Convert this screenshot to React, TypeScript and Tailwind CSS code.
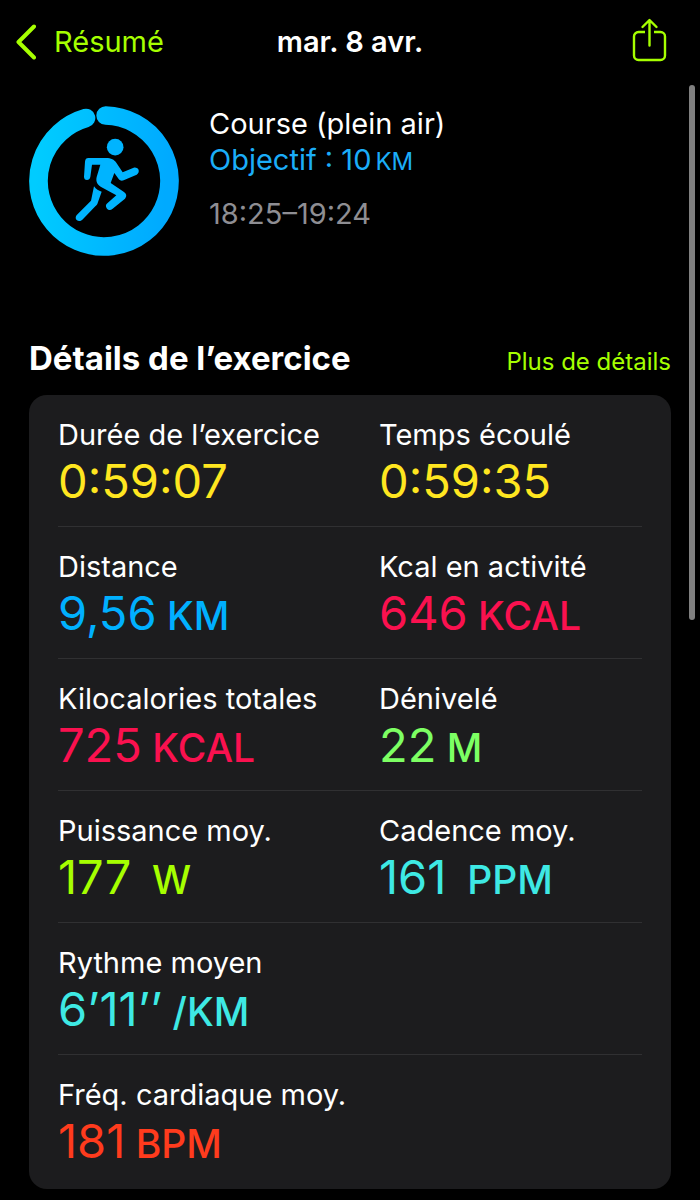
import { FC } from "react";

interface Metric {
  label: string;
  value: string;
  unit?: string;
  color: string;
}

const rows: Metric[][] = [
  [
    { label: "Durée de l’exercice", value: "0:59:07", color: "text-[#ffe620]" },
    { label: "Temps écoulé", value: "0:59:35", color: "text-[#ffe620]" },
  ],
  [
    { label: "Distance", value: "9,56", unit: "KM", color: "text-[#00b0ff]" },
    { label: "Kcal en activité", value: "646", unit: "KCAL", color: "text-[#fa114f]" },
  ],
  [
    { label: "Kilocalories totales", value: "725", unit: "KCAL", color: "text-[#fa114f]" },
    { label: "Dénivelé", value: "22", unit: "M", color: "text-[#7dff63]" },
  ],
  [
    { label: "Puissance moy.", value: "177", unit: "\u00a0W", color: "text-[#a6ff00]" },
    { label: "Cadence moy.", value: "161", unit: "\u00a0PPM", color: "text-[#3ee9e4]" },
  ],
  [{ label: "Rythme moyen", value: "6’11’’", unit: "/KM", color: "text-[#3ee9e4]" }],
  [{ label: "Fréq. cardiaque moy.", value: "181", unit: "BPM", color: "text-[#ff3b1d]" }],
];

const Header: FC = () => (
  <header className="grid h-[84px] grid-cols-[1fr_auto_1fr] items-center px-4 text-[29px] leading-9">
    <a href="#resume" className="flex items-center gap-[18px] text-[#a6ff00]">
      <svg className="h-9 w-5" viewBox="0 0 20 36" fill="none" aria-hidden="true">
        <path
          d="M18 2.5 2.5 18 18 33.5"
          stroke="currentColor"
          strokeWidth="4"
          strokeLinecap="round"
          strokeLinejoin="round"
        />
      </svg>
      Résumé
    </a>
    <h1 className="font-semibold">mar. 8 avr.</h1>
    <button type="button" aria-label="Partager" className="justify-self-end pr-4 text-[#a6ff00]">
      <svg
        className="h-[50px] w-9"
        viewBox="0 0 36 50"
        fill="none"
        stroke="currentColor"
        strokeWidth="2.4"
        strokeLinecap="round"
        strokeLinejoin="round"
        aria-hidden="true"
      >
        <path
          d="M13 15H6.5A4.5 4.5 0 0 0 2 19.5v19A4.5 4.5 0 0 0 6.5 43h22a4.5 4.5 0 0 0 4.5-4.5v-19a4.5 4.5 0 0 0-4.5-4.5H22"
          strokeLinecap="butt"
        />
        <path d="M17.5 28.5V3.5M10.500 10l7-7 7 7" />
      </svg>
    </button>
  </header>
);

const GoalRing: FC = () => (
  <svg className="size-[150px] shrink-0" viewBox="27 33 450 450" role="img" aria-label="Course">
    <defs>
      <linearGradient id="ring" x1="1" y1="0.3" x2="0" y2="0.2">
        <stop offset="0" stopColor="#00aaff" />
        <stop offset="1" stopColor="#00ccff" />
      </linearGradient>
    </defs>
    <path
      d="M257 61.5A196.5 196.5 0 1 1 198 69"
      fill="none"
      stroke="url(#ring)"
      strokeWidth="56"
      strokeLinecap="round"
    />
    <g fill="#00b4ff">
      <circle cx="285.5" cy="156.5" r="25" />
      {/* arms, torso and front leg */}
      <path d="M205 189H258C274 189 282 194 289 203L308 232L341 218C346 216 352 218 355 223C358 229 356 236 350 239L311 256C305 258 300 257 296 252L283 234L272 264L312 291C320 296 321 304 315 311L277 342C272 347 265 346 261 341C256 335 257 329 262 325L289 301L242 275C231 268 227 259 230 246L241 209H216L211 246C210 252 206 255 201 255C195 255 192 251 192 245L195 200C196 192 199 189 205 189Z" />
      {/* back leg */}
      <path d="M222 274C228 283 236 287 245 290L233 324C232 328 230 331 226 334L187 374C182 379 175 380 170 375C166 371 166 364 171 359L213 317Z" />
    </g>
  </svg>
);

const MetricCell: FC<Metric> = ({ label, value, unit, color }) => (
  <div className="whitespace-nowrap">
    <dt className="text-[29px] leading-9">{label}</dt>
    <dd className={`text-[47px] leading-[56px] ${color}`}>
      {value}
      {unit && <span className="text-[39px] leading-none font-medium"> {unit}</span>}
    </dd>
  </div>
);

export default function App() {
  return (
    <div className="relative min-h-screen bg-black pb-3 font-['Inter','Liberation_Sans',sans-serif] text-white">
      <Header />

      <main className="px-[29px]">
        <section className="flex gap-[30px] pt-[22px]">
          <GoalRing />
          <div className="text-[29px] leading-9">
            <h2>Course (plein air)</h2>
            <p className="text-[#1badf8]">
              Objectif : 10<span className="ml-1 text-[24px] leading-none">KM</span>
            </p>
            <p className="mt-[18px] text-[#8e8e93]">18:25–19:24</p>
          </div>
        </section>

        <section className="pt-[81px]">
          <div className="flex items-baseline justify-between pb-[15px]">
            <h2 className="text-[33px] leading-[43px] font-bold">Détails de l’exercice</h2>
            <a href="#details" className="text-[24px] leading-9 text-[#a6ff00]">
              Plus de détails
            </a>
          </div>
          <dl className="rounded-[18px] bg-[#1c1c1e] px-[29px]">
            {rows.map((row) => (
              <div
                key={row[0].label}
                className="grid grid-cols-2 gap-x-[58px] border-b border-[#303032] pt-[22px] pb-[17px] last:border-b-0 last:pb-5"
              >
                {row.map((metric) => (
                  <MetricCell key={metric.label} {...metric} />
                ))}
              </div>
            ))}
          </dl>
        </section>
      </main>

      {/* Scroll indicator */}
      <div className="absolute top-[85px] right-[5px] h-[535px] w-[6px] rounded-full bg-[#808080]" />
    </div>
  );
}
